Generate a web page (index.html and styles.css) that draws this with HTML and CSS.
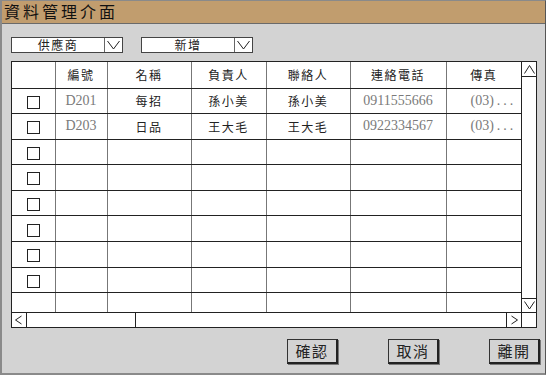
FILE: index.html
```html
<!DOCTYPE html>
<html>
<head>
<meta charset="utf-8">
<link rel="stylesheet" href="styles.css">
</head>
<body>
<div class="window">
  <div class="titlebar">資料管理介面</div>
  <div class="content">
    <div class="filters">
      <div class="select"><span class="sel-text">供應商</span><span class="sel-arrow"><svg width="17" height="14" viewBox="0 0 17 14"><polyline points="2.5,3 8.5,11 14.5,3" fill="none" stroke="#222" stroke-width="1"/></svg></span></div>
      <div class="select"><span class="sel-text">新增</span><span class="sel-arrow"><svg width="17" height="14" viewBox="0 0 17 14"><polyline points="2.5,3 8.5,11 14.5,3" fill="none" stroke="#222" stroke-width="1"/></svg></span></div>
    </div>
    <div class="grid">
      <div class="table-wrap">
        <table class="data">
          <colgroup>
            <col style="width:43px"><col style="width:52px"><col style="width:84px"><col style="width:75px"><col style="width:84px"><col style="width:96px"><col style="width:75px">
          </colgroup>
          <thead>
            <tr><th></th><th>編號</th><th>名稱</th><th>負責人</th><th>聯絡人</th><th>連絡電話</th><th>傳真</th></tr>
          </thead>
          <tbody>
            <tr><td><span class="cb"></span></td><td class="num">D201</td><td>每招</td><td>孫小美</td><td>孫小美</td><td class="num">0911555666</td><td class="num fax">(03)<span class="dots">...</span></td></tr>
            <tr><td><span class="cb"></span></td><td class="num">D203</td><td>日品</td><td>王大毛</td><td>王大毛</td><td class="num">0922334567</td><td class="num fax">(03)<span class="dots">...</span></td></tr>
            <tr><td><span class="cb"></span></td><td></td><td></td><td></td><td></td><td></td><td></td></tr>
            <tr><td><span class="cb"></span></td><td></td><td></td><td></td><td></td><td></td><td></td></tr>
            <tr><td><span class="cb"></span></td><td></td><td></td><td></td><td></td><td></td><td></td></tr>
            <tr><td><span class="cb"></span></td><td></td><td></td><td></td><td></td><td></td><td></td></tr>
            <tr><td><span class="cb"></span></td><td></td><td></td><td></td><td></td><td></td><td></td></tr>
            <tr><td><span class="cb"></span></td><td></td><td></td><td></td><td></td><td></td><td></td></tr>
            <tr class="last"><td></td><td></td><td></td><td></td><td></td><td></td><td></td></tr>
          </tbody>
        </table>
      </div>
      <div class="vscroll">
        <div class="vbtn up"><svg width="15" height="15" viewBox="0 0 15 15"><polyline points="2.5,11.5 7.5,3.5 12.5,11.5" fill="none" stroke="#222" stroke-width="1"/></svg></div>
        <div class="vtrack"></div>
        <div class="vbtn down"><svg width="15" height="13" viewBox="0 0 15 13"><polyline points="2.5,2.5 7.5,10 12.5,2.5" fill="none" stroke="#222" stroke-width="1"/></svg></div>
      </div>
      <div class="hscroll">
        <div class="hbtn"><svg width="14" height="14" viewBox="0 0 14 14"><polyline points="9.5,3 3.5,7 9.5,11" fill="none" stroke="#222" stroke-width="1"/></svg></div>
        <div class="hthumb"></div>
        <div class="htrack"></div>
        <div class="hbtn right"><svg width="14" height="14" viewBox="0 0 14 14"><polyline points="4.5,3 10.5,7 4.5,11" fill="none" stroke="#222" stroke-width="1"/></svg></div>
      </div>
      <div class="corner"></div>
    </div>
    <div class="buttons">
      <button class="btn">確認</button>
      <button class="btn">取消</button>
      <button class="btn">離開</button>
    </div>
  </div>
</div>
</body>
</html>
```
FILE: styles.css
```css
* { box-sizing: border-box; }
html, body { margin: 0; padding: 0; background: #fff; }
body { font-family: "Noto Sans CJK TC", "Liberation Serif", serif; }

.window {
  width: 546px;
  height: 375px;
  background: #d3d3d3;
  border-top: 1px solid #8a8a8a;
  border-left: 2px solid #8a8a8a;
  border-right: 1px solid #555;
  border-bottom: 2px solid #8a8a8a;
  display: flex;
  flex-direction: column;
}

.titlebar {
  height: 23px;
  background: #c19d6e;
  border-bottom: 1px solid #6a6a6a;
  font-size: 16px;
  line-height: 21px;
  letter-spacing: 3px;
  padding-left: 2px;
  color: #111;
}

.content {
  padding: 13px 0 0 9px;
  flex: 1;
  display: flex;
  flex-direction: column;
}

.filters {
  display: flex;
  gap: 18px;
  height: 16px;
}

.select {
  width: 112px;
  height: 16px;
  display: flex;
  background: #fff;
  border: 1px solid #444;
}
.sel-text {
  flex: 1;
  text-align: center;
  font-size: 12px;
  line-height: 14px;
  letter-spacing: 1.5px;
  border-right: 1px solid #666;
  color: #222;
}
.sel-arrow {
  width: 17px;
  display: flex;
}

.grid {
  margin-top: 8px;
  width: 526px;
  height: 267px;
  border: 1px solid #222;
  display: grid;
  grid-template-columns: 509px 16px;
  grid-template-rows: 1fr 15px;
  background: #fff;
}

.table-wrap { overflow: hidden; }

.data {
  border-collapse: collapse;
  table-layout: fixed;
  width: 509px;
}
.data th, .data td {
  border-left: 1px solid #777;
  border-bottom: 1px solid #222;
  padding: 0;
  text-align: center;
  font-weight: normal;
  font-size: 12px;
  letter-spacing: 1.5px;
  color: #222;
  white-space: nowrap;
  overflow: hidden;
}
.data th:first-child, .data td:first-child { border-left: none; }
.data thead tr { height: 26px; }
.data tbody tr { height: 25.6px; }
.data tbody tr.last { height: 20px; }
.data tbody tr.last td { border-bottom: none; }

.data td.num {
  font-family: "Liberation Serif", serif;
  font-size: 14px;
  color: #7a7a7a;
  letter-spacing: 0;
}
.data td.fax { padding-left: 24px; text-align: left; }
.dots { letter-spacing: 3px; margin-left: 3px; }

.cb {
  display: inline-block;
  width: 13px;
  height: 13px;
  border: 1px solid #222;
  vertical-align: middle;
  background: #fff;
  margin-top: -2px;
}

.vscroll {
  border-left: 1px solid #222;
  display: flex;
  flex-direction: column;
}
.vbtn { display: flex; }
.vbtn.up { height: 15px; border-bottom: 1px solid #222; }
.vbtn.down { border-top: 1px solid #222; height: 14px; }
.vtrack { flex: 1; }

.hscroll {
  border-top: 1px solid #222;
  display: flex;
  height: 15px;
}
.hbtn {
  width: 15px;
  display: flex;
  border-right: 1px solid #222;
}
.hbtn.right { border-right: none; border-left: 1px solid #222; }
.hthumb { width: 109px; border-right: 1px solid #222; }
.htrack { flex: 1; }

.corner {
  border-top: 1px solid #222;
  border-left: 1px solid #222;
}

.buttons {
  margin-top: 11px;
  display: flex;
  justify-content: flex-end;
  gap: 50px;
  padding-right: 5px;
}
.btn {
  width: 51px;
  height: 25px;
  background: #d3d3d3;
  border-top: 1px solid #333;
  border-left: 1px solid #333;
  border-right: 2px solid #222;
  border-bottom: 2px solid #222;
  box-shadow: 1px 1px 0 #777;
  font-family: "Noto Sans CJK TC", sans-serif;
  font-size: 15px;
  letter-spacing: 1.5px;
  line-height: 20px;
  padding: 0;
  color: #222;
}
```
